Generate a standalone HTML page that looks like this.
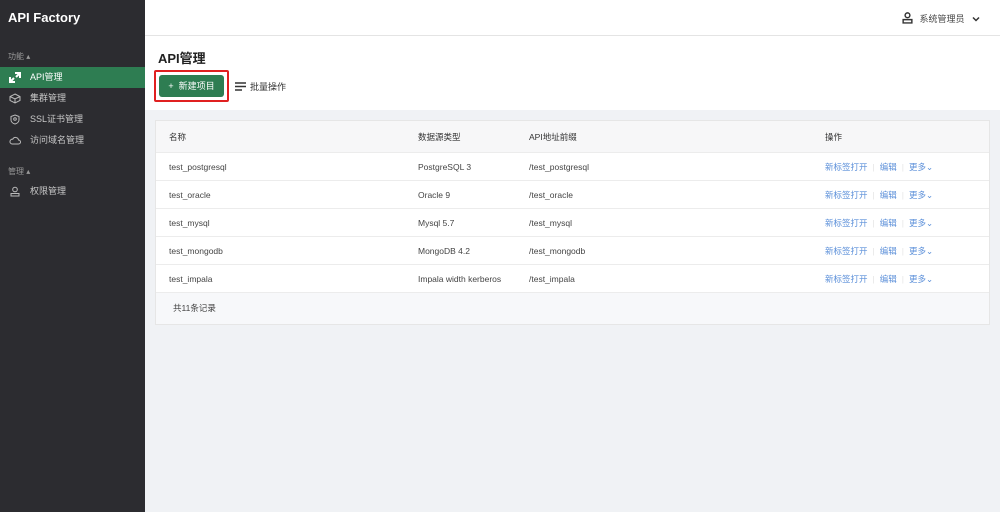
<!DOCTYPE html>
<html><head><meta charset="utf-8"><style>
*{margin:0;padding:0;box-sizing:border-box}
body{width:1000px;height:512px;overflow:hidden;font-family:"Liberation Sans","Noto Sans CJK SC",sans-serif;background:#f0f2f5;position:relative;font-size:9px;color:#333}
.side{position:absolute;left:0;top:0;width:145px;height:512px;background:#2c2c30;color:#bbb}
.logo{position:absolute;left:8px;top:10px;font-size:13px;font-weight:bold;color:#fff}
.grp{position:absolute;left:8px;font-size:8px;color:#999}
.item{position:absolute;left:0;width:145px;height:21px;line-height:21px;padding-left:30px;font-size:9px;color:#c8c8c8}
.item.act{background:#2e7d52;color:#fff}
.item svg{position:absolute;left:9px;top:5px}
.top{position:absolute;left:145px;top:0;right:0;height:36px;background:#fff;border-bottom:1px solid #e4e4e4}
.user{position:absolute;right:20px;top:12px;font-size:9px;color:#444}
.titlebar{position:absolute;left:145px;top:36px;right:0;height:74px;background:#fff}
.h1{position:absolute;left:13px;top:12px;font-size:13px;font-weight:bold;color:#222}
.btnbox{position:absolute;left:9px;top:34px;width:75px;height:32px;border:2px solid #e02020;border-radius:2px}
.btn{position:absolute;left:3px;top:3px;width:65px;height:22px;background:#2e7d52;border-radius:3px;color:#fff;font-size:9px;line-height:22px;text-align:center}
.batch{position:absolute;left:90px;top:44px;font-size:9px;color:#333}
.card{position:absolute;left:155px;top:120px;width:835px;height:205px;background:#fff;border:1px solid #e6e6e6}
.row{position:absolute;left:0;width:833px;height:28px;border-bottom:1px solid #ececec;line-height:28px;font-size:8.5px;color:#444}
.row span{position:absolute}
.hd{background:#f7f7f8;height:32px;line-height:32px;color:#333}
.lk{color:#5b8fd9}
.sep{color:#e4e4e4;font-weight:normal;margin:0 5px}
.ft{position:absolute;left:0;top:172px;width:833px;height:31px;background:#f7f8fa;line-height:31px;padding-left:17px;font-size:8.5px;color:#444}
</style></head><body>
<div class="side">
<div class="logo">API Factory</div>
<div class="grp" style="top:51px">功能 ▴</div>
<div class="item act" style="top:67px"><svg width="12" height="11" viewBox="0 0 12 11"><path d="M6 1h5v5M11 1L7 5M6 10H1V5M1 10l4-4" stroke="#fff" stroke-width="2" fill="none"/></svg>API管理</div>
<div class="item" style="top:88px"><svg width="12" height="11" viewBox="0 0 12 11"><path d="M6 1l5 2.5v4L6 10 1 7.5v-4zM1 3.5L6 6l5-2.5M6 6v4" stroke="#bbb" fill="none"/></svg>集群管理</div>
<div class="item" style="top:109px"><svg width="12" height="11" viewBox="0 0 12 11"><path d="M6 1l4 1.5v3.5C10 8 8 9.5 6 10 4 9.5 2 8 2 6V2.5z" stroke="#bbb" fill="none"/><circle cx="6" cy="5" r="1.3" stroke="#bbb" fill="none"/></svg>SSL证书管理</div>
<div class="item" style="top:130px"><svg width="12" height="11" viewBox="0 0 12 11"><path d="M3 9h6.5a2 2 0 000-4 3 3 0 00-5.7-.8A2.4 2.4 0 003 9z" stroke="#bbb" fill="none"/></svg>访问域名管理</div>
<div class="grp" style="top:166px">管理 ▴</div>
<div class="item" style="top:181px"><svg width="12" height="11" viewBox="0 0 12 11"><circle cx="6" cy="3.5" r="2.3" stroke="#bbb" fill="none"/><path d="M2 10V7.5h8V10zM2 10h8" stroke="#bbb" fill="none"/></svg>权限管理</div>
</div>
<div class="top"><div class="user"><svg width="11" height="12" viewBox="0 0 10 11" style="vertical-align:-2px;margin-right:6px"><circle cx="5" cy="3" r="2.2" stroke="#333" stroke-width="1.3" fill="none"/><path d="M1 10V7h8v3z" stroke="#333" stroke-width="1.3" fill="none"/></svg>系统管理员 <svg width="8" height="6" viewBox="0 0 8 6" style="margin-left:5px"><path d="M1 1.5l3 3 3-3" stroke="#333" stroke-width="1.5" fill="none"/></svg></div></div>
<div class="titlebar">
<div class="h1">API管理</div>
<div class="btnbox"><div class="btn">+ &nbsp;新建项目</div></div>
<div class="batch"><svg width="11" height="9" viewBox="0 0 11 9" style="vertical-align:-1px;margin-right:4px"><path d="M0 1h11M0 4.5h11M0 8h7" stroke="#333" stroke-width="1.4"/></svg>批量操作</div>
</div>
<div class="card">
<div class="row hd" style="top:0"><span style="left:13px">名称</span><span style="left:262px">数据源类型</span><span style="left:373px">API地址前缀</span><span style="left:669px">操作</span></div>
<div class="row" style="top:32px"><span style="left:13px">test_postgresql</span><span style="left:262px">PostgreSQL 3</span><span style="left:373px">/test_postgresql</span><span style="left:669px" class="lk">新标签打开<b class="sep">|</b>编辑<b class="sep">|</b>更多⌄</span></div>
<div class="row" style="top:60px"><span style="left:13px">test_oracle</span><span style="left:262px">Oracle 9</span><span style="left:373px">/test_oracle</span><span style="left:669px" class="lk">新标签打开<b class="sep">|</b>编辑<b class="sep">|</b>更多⌄</span></div>
<div class="row" style="top:88px"><span style="left:13px">test_mysql</span><span style="left:262px">Mysql 5.7</span><span style="left:373px">/test_mysql</span><span style="left:669px" class="lk">新标签打开<b class="sep">|</b>编辑<b class="sep">|</b>更多⌄</span></div>
<div class="row" style="top:116px"><span style="left:13px">test_mongodb</span><span style="left:262px">MongoDB 4.2</span><span style="left:373px">/test_mongodb</span><span style="left:669px" class="lk">新标签打开<b class="sep">|</b>编辑<b class="sep">|</b>更多⌄</span></div>
<div class="row" style="top:144px"><span style="left:13px">test_impala</span><span style="left:262px">Impala width kerberos</span><span style="left:373px">/test_impala</span><span style="left:669px" class="lk">新标签打开<b class="sep">|</b>编辑<b class="sep">|</b>更多⌄</span></div>
<div class="ft">共11条记录</div>
</div>
</body></html>
